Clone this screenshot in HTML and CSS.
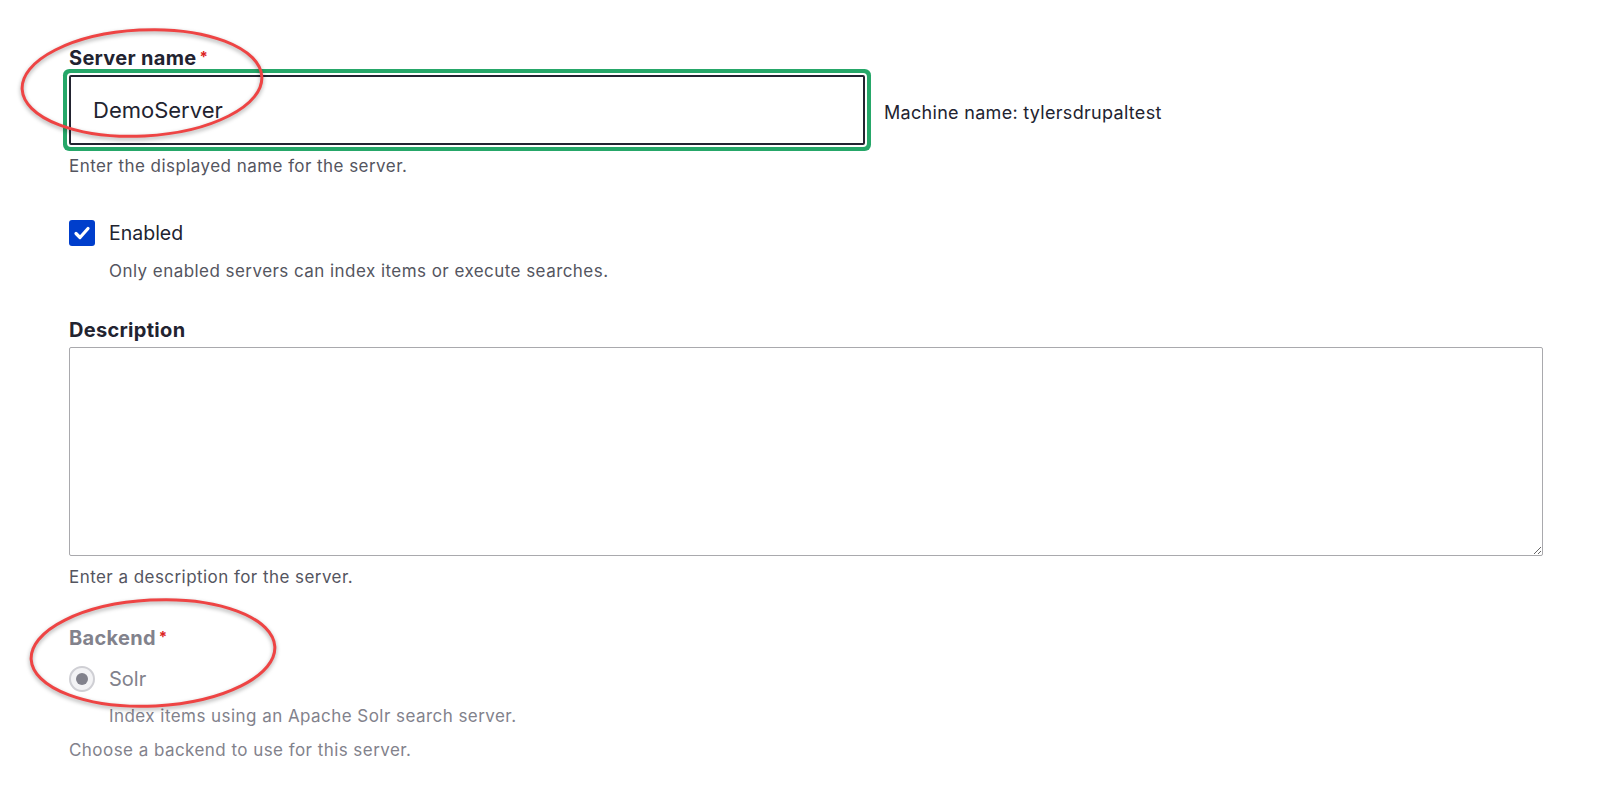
FILE: index.html
```html
<!DOCTYPE html>
<html lang="en">
<head>
<meta charset="utf-8">
<title>Server</title>
<link rel="stylesheet" href="styles.css">
</head>
<body>
<div class="page">
  <div class="item">
    <label class="label">Server name<span class="req">*</span></label>
    <div class="name-row">
      <input class="text-input" type="text" value="DemoServer">
      <span class="machine">Machine name: tylersdrupaltest</span>
    </div>
    <div class="desc desc-1">Enter the displayed name for the server.</div>
  </div>

  <div class="item check-item">
    <div class="check-row">
      <span class="checkbox"><svg viewBox="0 0 26 26" width="26" height="26"><path d="M7 13.5 L11 17.5 L19 8.5" fill="none" stroke="#fff" stroke-width="3.2" stroke-linecap="round" stroke-linejoin="round"/></svg></span>
      <span class="check-label">Enabled</span>
    </div>
    <div class="desc sub-desc">Only enabled servers can index items or execute searches.</div>
  </div>

  <div class="item desc-item">
    <label class="label">Description</label>
    <textarea class="textarea"></textarea>
    <div class="desc desc-1">Enter a description for the server.</div>
  </div>

  <div class="item backend-item">
    <div class="label disabled">Backend<span class="req">*</span></div>
    <div class="radio-row">
      <span class="radio"><span class="dot"></span></span>
      <span class="radio-label">Solr</span>
    </div>
    <div class="desc sub-desc muted first-muted">Index items using an Apache Solr search server.</div>
    <div class="desc muted last-muted">Choose a backend to use for this server.</div>
  </div>

  <svg class="annot" width="1600" height="796" viewBox="0 0 1600 796">
    <ellipse cx="142" cy="83" rx="120" ry="53" transform="rotate(-3 142 83)" fill="none" stroke="#ee4444" stroke-width="3"/>
    <ellipse cx="153" cy="653" rx="122" ry="53" transform="rotate(-3 153 653)" fill="none" stroke="#ee4444" stroke-width="3"/>
  </svg>
</div>
</body>
</html>
```

FILE: styles.css
```css
html, body {
  margin: 0;
  padding: 0;
  background: #fff;
}
body {
  font-family: Inter, "Noto Sans", "Liberation Sans", sans-serif;
  color: #222330;
}
.page {
  position: relative;
  width: 1600px;
  height: 796px;
  box-sizing: border-box;
  padding: 46px 57px 0 69px;
  overflow: hidden;
}
.label {
  display: block;
  font-size: 20px;
  font-weight: 700;
  line-height: 24px;
  letter-spacing: 0.3px;
  color: #222330;
}
.label.disabled {
  color: #82828c;
}
.req {
  color: #dc2323;
  font-size: 15px;
  margin-left: 3px;
  vertical-align: top;
  position: relative;
  top: -1px;
}
.name-row {
  display: flex;
  align-items: center;
  gap: 19px;
  margin-top: 5px;
}
.text-input {
  box-sizing: border-box;
  width: 796px;
  height: 70px;
  margin: 0;
  padding: 0 22px;
  border: 2px solid #222330;
  border-radius: 2px;
  box-shadow: 0 0 0 2px #fff, 0 0 0 6px #26a769;
  font-family: inherit;
  font-size: 22px;
  color: #222330;
  outline: none;
  background: #fff;
}
.machine {
  font-size: 18px;
  letter-spacing: 0.3px;
  color: #222330;
  position: relative;
  top: 2px;
}
.desc {
  font-size: 17px;
  line-height: 22px;
  letter-spacing: 0.45px;
  color: #545560;
}
.desc-1 {
  margin-top: 10px;
}
.check-item {
  margin-top: 43px;
}
.check-row, .radio-row {
  display: flex;
  align-items: center;
  gap: 14px;
  height: 26px;
}
.checkbox {
  width: 26px;
  height: 26px;
  border-radius: 3px;
  background: #003ecc;
  display: block;
}
.checkbox svg {
  display: block;
}
.check-label, .radio-label {
  font-size: 19.5px;
  color: #222330;
}
.radio-label {
  font-size: 20px;
  color: #82828c;
}
.sub-desc {
  margin-left: 40px;
  margin-top: 14px;
}
.desc-item {
  margin-top: 36px;
}
.textarea {
  display: block;
  box-sizing: border-box;
  width: 1474px;
  height: 209px;
  margin: 5px 0 0 0;
  border: 1px solid #a9a9ad;
  border-radius: 2px;
  resize: both;
  font-family: inherit;
  font-size: 16px;
  background: #fff;
  outline: none;
}
.backend-item {
  margin-top: 38px;
}
.radio-row {
  margin-top: 16px;
}
.radio {
  box-sizing: border-box;
  width: 26px;
  height: 26px;
  border-radius: 50%;
  border: 2px solid #cfcfd4;
  background: #f3f3f5;
  display: flex;
  align-items: center;
  justify-content: center;
}
.dot {
  width: 12px;
  height: 12px;
  border-radius: 50%;
  background: #82828c;
}
.muted {
  color: #82828c;
}
.first-muted {
  margin-top: 13px;
}
.last-muted {
  margin-top: 12px;
}
.annot {
  position: absolute;
  left: 0;
  top: 0;
  pointer-events: none;
  filter: drop-shadow(0 2px 2px rgba(0, 0, 0, 0.35));
}
```
